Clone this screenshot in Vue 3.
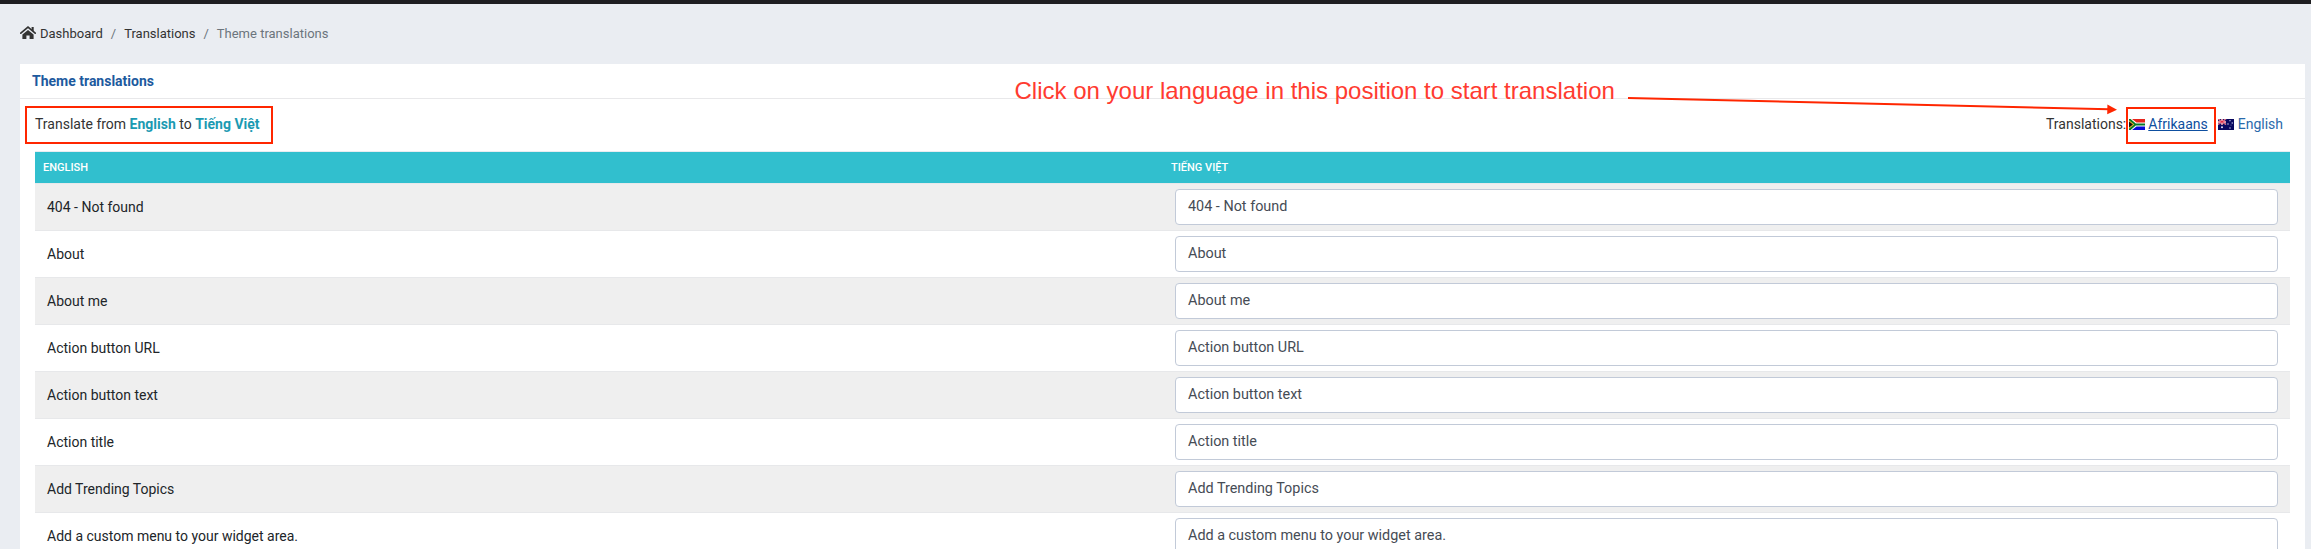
<script setup>
const rows = [
  '404 - Not found',
  'About',
  'About me',
  'Action button URL',
  'Action button text',
  'Action title',
  'Add Trending Topics',
  'Add a custom menu to your widget area.',
]
</script>

<template>
  <div class="page">
    <nav class="breadcrumb">
      <svg class="home" viewBox="0 0 16 14" width="16" height="14">
        <path d="M0.8 7.2 8 1.2l7.2 6" fill="none" stroke="#333" stroke-width="1.7" stroke-linecap="round" />
        <path d="M11.6 1h2.1v4.6l-2.1-1.8zM8 4l5.6 4.6V13H9.6V9.4H6.4V13H2.4V8.6z" fill="#333" />
      </svg>
      <a class="crumb first">Dashboard</a>
      <span class="sep">/</span>
      <a class="crumb">Translations</a>
      <span class="sep">/</span>
      <span class="current">Theme translations</span>
    </nav>

    <section class="card">
      <h4 class="title">Theme translations</h4>
      <div class="toolbar">
        <p class="from">Translate from <b>English</b> to <b>Tiếng Việt</b></p>
        <div class="langs">
          <span class="label">Translations:</span>
          <svg class="flag" viewBox="0 0 16 11" width="16" height="11">
            <path d="M0 0h16v5.5H0z" fill="#e8251c" />
            <path d="M0 5.5h16V11H0z" fill="#0808d8" />
            <path d="M0 0h3l4.5 3.4H16v4.2H7.5L3 11H0z" fill="#fff" />
            <path d="M0 0h1.6l5.2 4.4H16v2.2H6.8L1.6 11H0z" fill="#087a28" />
            <path d="M0 1.2 5.3 5.5 0 9.8z" fill="#f5b82e" />
            <path d="M0 2.4 3.9 5.5 0 8.6z" fill="#111" />
          </svg>
          <a class="lang active">Afrikaans</a>
          <svg class="flag second" viewBox="0 0 16 11" width="16" height="11">
            <path d="M0 0h16v11H0z" fill="#08085f" />
            <path d="M0 0l8 5.5M8 0L0 5.5" stroke="#e8cfe0" stroke-width="1.3" />
            <path d="M4 0v5.8M0 2.8h8" stroke="#fff" stroke-width="1.8" />
            <path d="M4 0v5.8M0 2.8h8M0 0l8 5.5M8 0L0 5.5" stroke="#dc2240" stroke-width=".8" />
            <g fill="#e4e4ff">
              <circle cx="4" cy="8.3" r="1" />
              <circle cx="12" cy="1.7" r=".65" />
              <circle cx="10" cy="5" r=".65" />
              <circle cx="14.2" cy="4" r=".65" />
              <circle cx="12" cy="9" r=".65" />
              <circle cx="13" cy="6" r=".4" />
            </g>
          </svg>
          <a class="lang">English</a>
        </div>
      </div>

      <div class="table">
        <div class="row head">
          <div>ENGLISH</div>
          <div>TIẾNG VIỆT</div>
        </div>
        <div v-for="row in rows" :key="row" class="row item">
          <div class="source">{{ row }}</div>
          <div class="field">{{ row }}</div>
        </div>
      </div>
    </section>

    <div class="mark mark-from"></div>
    <div class="mark mark-lang"></div>
    <div class="note">Click on your language in this position to start translation</div>
    <svg class="arrow" viewBox="0 0 492 20" width="492" height="20">
      <path d="M0 3 481 14.3" stroke="#ff2600" stroke-width="2" />
      <path d="M479.4 9.6 489 14.8 479.2 19.2z" fill="#ff2600" />
    </svg>
  </div>
</template>

<style>
body {
  background: #eaedf2;
  overflow: hidden;
}
</style>

<style scoped>
.page {
  position: relative;
  box-sizing: border-box;
  height: 549px;
  overflow: hidden;
  border-top: 4px solid #1e1e21;
  background: #eaedf2;
  font-family: Roboto, "Noto Sans", sans-serif;
  font-size: 14px;
  line-height: 20px;
  color: #333;
}
.breadcrumb {
  display: flex;
  align-items: center;
  height: 60px;
  padding: 0 20px;
  box-sizing: border-box;
  font-size: 13px;
}
.home { margin-top: -3px; }
.crumb { color: #333; }
.first { margin-left: 4px; }
.sep { color: #6c757d; width: 21.3px; text-align: center; }
.current { color: #6c757d; }
.card {
  width: 2285px;
  margin-left: 20px;
  background: #fff;
}
.title {
  box-sizing: border-box;
  height: 35px;
  margin: 0;
  padding: 7px 12px 0;
  border-bottom: 1px solid #e8e8ea;
  font-size: 14px;
  line-height: 20px;
  font-weight: 700;
  color: #1d5a9e;
}
.toolbar {
  display: flex;
  justify-content: space-between;
  align-items: flex-start;
  height: 52px;
  padding: 15px 22px 0 15px;
  box-sizing: border-box;
}
.from { margin: 0; }
.from b { color: #1b9ab2; }
.langs { display: flex; align-items: center; }
.flag { margin: 1px 3px 0 3px; }
.flag.second { margin: 1px 4px 0 10px; }
.lang { color: #2a6aab; }
.active { color: #0e4fa0; text-decoration: underline; }
.table {
  margin: 0 15px;
  border-top: 1px solid #e7ecf1;
}
.row {
  display: grid;
  grid-template-columns: 1132px 1123px;
}
.head {
  height: 31px;
  line-height: 31px;
  background: #31bfce;
  color: #fff;
  font-size: 11px;
  font-weight: 500;
}
.head div { padding-left: 8px; }
.head div + div { padding-left: 4px; }
.item {
  box-sizing: border-box;
  height: 47px;
  border-top: 1px solid #e7e8ea;
  color: #212529;
}
.item:nth-child(even) { background: #efefef; }
.source { padding: 13px 12px 0; }
.field {
  box-sizing: border-box;
  width: 1103px;
  height: 36px;
  margin: 5px 0 0 8px;
  padding: 7px 12px 5px;
  border: 1px solid #c2cad8;
  border-radius: 4px;
  background: #fff;
  font-size: 14.4px;
  color: #464c55;
}
.mark {
  position: absolute;
  box-sizing: border-box;
  border: 2px solid #ff2600;
}
.mark-from { left: 25px; top: 102px; width: 248px; height: 38px; }
.mark-lang { left: 2126px; top: 103px; width: 90px; height: 37px; }
.note {
  position: absolute;
  left: 1014.5px;
  top: 73px;
  font: 24px/28px "Liberation Sans", sans-serif;
  white-space: nowrap;
  color: #ff3b30;
}
.arrow { position: absolute; left: 1628px; top: 91px; }
</style>
